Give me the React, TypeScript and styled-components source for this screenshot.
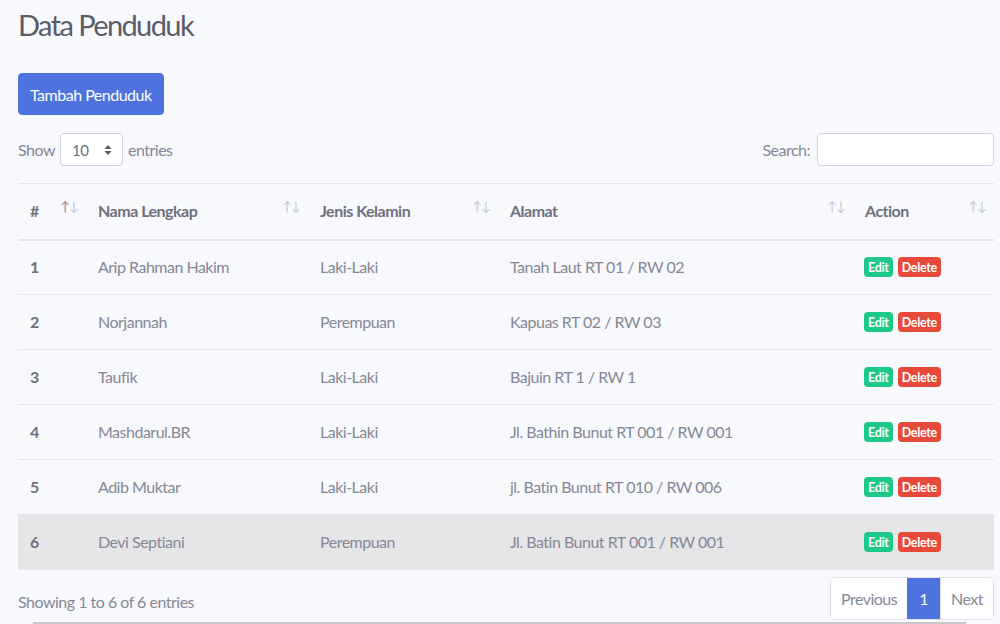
import React from "react";
import styled, { createGlobalStyle } from "styled-components";

const Global = createGlobalStyle`
  html, body { margin: 0; padding: 0; background: #f8f9fc; }
  body { font-family: Lato, "Open Sans", sans-serif; color: #858796; letter-spacing: -0.5px; }
  * { box-sizing: border-box; }
`;

const Page = styled.div`
  position: relative;
  width: 1000px;
  height: 624px;
  overflow: hidden;
  padding: 8px 6px 0 18px;
  background: #f8f9fc;
`;

const Title = styled.h1`
  margin: 0;
  height: 34px;
  font-size: 29px;
  line-height: 34px;
  font-weight: 400;
  letter-spacing: -1.6px;
  color: #5a5c69;
`;

const PrimaryButton = styled.button`
  margin-top: 31px;
  height: 42px;
  padding: 0 11px;
  border: 1px solid #4e73df;
  border-radius: 4px;
  background: #4e73df;
  color: #fff;
  font-family: inherit;
  font-size: 16px;
  letter-spacing: -0.5px;
`;

const Controls = styled.div`
  margin-top: 18px;
  height: 33px;
  display: flex;
  justify-content: space-between;
  align-items: center;
  font-size: 16px;
`;

const Inline = styled.label`
  display: flex;
  align-items: center;
  gap: 5px;
  color: #858796;
`;

const SelectBox = styled.div`
  width: 63px;
  height: 33px;
  border: 1px solid #d1d3e2;
  border-radius: 4px;
  background: #fff;
  display: flex;
  align-items: center;
  justify-content: space-between;
  padding: 0 10px 0 11px;
  color: #6e707e;
  font-size: 15px;
`;

const SearchInput = styled.input`
  width: 177px;
  height: 33px;
  border: 1px solid #d1d3e2;
  border-radius: 4px;
  background: #fff;
  margin-left: 2px;
`;

const Table = styled.table`
  margin-top: 17px;
  width: 976px;
  border-collapse: collapse;
  font-size: 16px;
  table-layout: fixed;
`;

const Th = styled.th<{ $w: number }>`
  width: ${(p) => p.$w}px;
  height: 56px;
  padding: 0 12px 2px;
  text-align: left;
  font-weight: 700;
  color: #6e707e;
  border-top: 1px solid #e3e6f0;
  border-bottom: 2px solid #e3e6f0;
  position: relative;
`;

const SortIcon = styled.span<{ $asc?: boolean }>`
  position: absolute;
  right: 8px;
  top: 14px;
  font-size: 13px;
  font-weight: 400;
  letter-spacing: -1px;
  color: #c6c8d2;
  & > b { font-weight: 400; color: ${(p) => (p.$asc ? "#858796" : "#c6c8d2")}; }
`;

const Tr = styled.tr<{ $hl?: boolean }>`
  background: ${(p) => (p.$hl ? "#e6e6e8" : "transparent")};
`;

const Td = styled.td<{ $num?: boolean }>`
  height: 55px;
  padding: 0 12px 2px;
  border-top: 1px solid #e3e6f0;
  color: ${(p) => (p.$num ? "#6e707e" : "#858796")};
  font-weight: ${(p) => (p.$num ? 700 : 400)};
  white-space: nowrap;
`;

const Badges = styled.div`
  display: flex;
  gap: 5px;
  margin-left: -1px;
  padding-top: 2px;
`;

const Badge = styled.span<{ $tone: "green" | "red" }>`
  display: inline-flex;
  align-items: center;
  justify-content: center;
  height: 20px;
  padding: 0 4px;
  border-radius: 4px;
  font-size: 12.5px;
  font-weight: 700;
  letter-spacing: -0.3px;
  color: #fff;
  background: ${(p) => (p.$tone === "green" ? "#1cc88a" : "#e74a3b")};
`;

const Footer = styled.div`
  margin-top: 7px;
  display: flex;
  justify-content: space-between;
  align-items: center;
  font-size: 16px;
`;

const Info = styled.div`
  padding-top: 6px;
  color: #858796;
`;

const Pager = styled.div`
  display: flex;
  height: 43px;
  border: 1px solid #dddfeb;
  border-radius: 5px;
  overflow: hidden;
  background: #fff;
`;

const PageItem = styled.span<{ $active?: boolean }>`
  display: flex;
  align-items: center;
  justify-content: center;
  padding: 0 ${(p) => (p.$active ? 12 : 10)}px;
  background: ${(p) => (p.$active ? "#4e73df" : "#fff")};
  color: ${(p) => (p.$active ? "#fff" : "#858796")};
  border-left: ${(p) => (p.$active ? "none" : "1px solid #dddfeb")};
  &:first-child { border-left: none; }
`;

const ScrollLine = styled.div`
  position: absolute;
  left: 33px;
  bottom: 0;
  width: 933px;
  height: 2px;
  background: #c9c9cc;
`;

const rows = [
  ["1", "Arip Rahman Hakim", "Laki-Laki", "Tanah Laut RT 01 / RW 02"],
  ["2", "Norjannah", "Perempuan", "Kapuas RT 02 / RW 03"],
  ["3", "Taufik", "Laki-Laki", "Bajuin RT 1 / RW 1"],
  ["4", "Mashdarul.BR", "Laki-Laki", "Jl. Bathin Bunut RT 001 / RW 001"],
  ["5", "Adib Muktar", "Laki-Laki", "jl. Batin Bunut RT 010 / RW 006"],
  ["6", "Devi Septiani", "Perempuan", "Jl. Batin Bunut RT 001 / RW 001"],
];

const cols = [
  { label: "#", w: 68, asc: true },
  { label: "Nama Lengkap", w: 222 },
  { label: "Jenis Kelamin", w: 190 },
  { label: "Alamat", w: 355 },
  { label: "Action", w: 141 },
];

export default function App() {
  return (
    <Page>
      <Global />
      <Title>Data Penduduk</Title>
      <PrimaryButton>Tambah Penduduk</PrimaryButton>
      <Controls>
        <Inline>
          Show
          <SelectBox>
            <span>10</span>
            <svg width="8" height="12" viewBox="0 0 8 12">
              <path d="M4 1 L7.5 5 H0.5 Z M4 11 L7.5 7 H0.5 Z" fill="#5a5c69" />
            </svg>
          </SelectBox>
          entries
        </Inline>
        <Inline>
          Search:
          <SearchInput />
        </Inline>
      </Controls>
      <Table>
        <thead>
          <tr>
            {cols.map((c) => (
              <Th key={c.label} $w={c.w}>
                {c.label}
                <SortIcon $asc={c.asc}>
                  <b>↑</b>↓
                </SortIcon>
              </Th>
            ))}
          </tr>
        </thead>
        <tbody>
          {rows.map((r, i) => (
            <Tr key={r[0]} $hl={i === 5}>
              <Td $num>{r[0]}</Td>
              <Td>{r[1]}</Td>
              <Td>{r[2]}</Td>
              <Td>{r[3]}</Td>
              <Td>
                <Badges>
                  <Badge $tone="green">Edit</Badge>
                  <Badge $tone="red">Delete</Badge>
                </Badges>
              </Td>
            </Tr>
          ))}
        </tbody>
      </Table>
      <Footer>
        <Info>Showing 1 to 6 of 6 entries</Info>
        <Pager>
          <PageItem>Previous</PageItem>
          <PageItem $active>1</PageItem>
          <PageItem>Next</PageItem>
        </Pager>
      </Footer>
      <ScrollLine />
    </Page>
  );
}
